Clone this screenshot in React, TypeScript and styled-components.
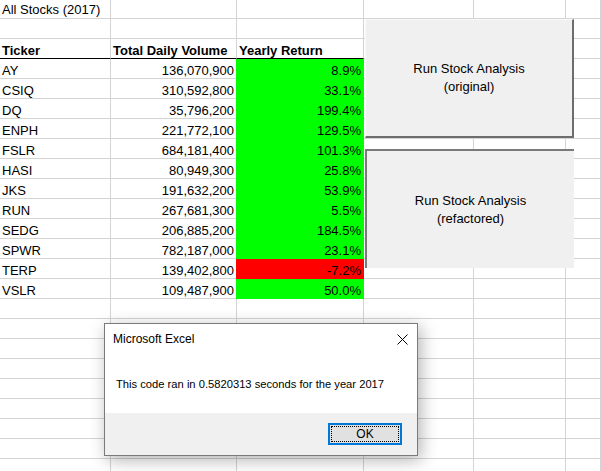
import { Fragment } from "react"
import styled, { createGlobalStyle } from "styled-components"

const GlobalStyle = createGlobalStyle`
    body {
        margin: 0;
        background: #fff;
        overflow: hidden;
    }
`

const GRID = "#d4d4d4"

const Page = styled.div`
    position: relative;
    width: 100vw;
    height: 100vh;
    overflow: hidden;
    font-family: "Liberation Sans", Arial, sans-serif;
`

const Sheet = styled.div`
    display: grid;
    grid-template-columns: 111px 126px 127px 110px 92px 1fr;
    grid-template-rows: 19px;
    grid-auto-rows: 20px;
`

const Cell = styled.div<{ $align?: "left" | "right"; $bold?: boolean; $fill?: string; $underline?: boolean; $top?: boolean }>`
    box-sizing: border-box;
    display: flex;
    align-items: flex-end;
    justify-content: ${p => (p.$align === "right" ? "flex-end" : "flex-start")};
    padding: 0 2px ${p => (p.$top ? "1px" : "0")};
    border-right: 1px solid ${p => p.$fill ?? GRID};
    border-bottom: 1px solid ${p => (p.$underline ? "#000" : p.$fill ?? GRID)};
    background: ${p => p.$fill ?? "#fff"};
    box-shadow: ${p => (p.$fill ? `-1px 0 0 ${p.$fill}` : "none")};
    font-size: 13px;
    line-height: 14px;
    font-weight: ${p => (p.$bold ? 700 : 400)};
    color: #000;
    white-space: nowrap;
`

const ShapeButton = styled.div<{ $left: number; $top: number; $pressed?: boolean }>`
    position: absolute;
    left: ${p => p.$left}px;
    top: ${p => p.$top}px;
    width: 209px;
    height: 119px;
    box-sizing: border-box;
    display: flex;
    flex-direction: column;
    align-items: center;
    justify-content: center;
    background: #f0f0f0;
    border-style: solid;
    border-width: ${p => (p.$pressed ? "2px 0 0 2px" : "1px 2px 2px 1px")};
    border-color: ${p => (p.$pressed ? "#7a7a7a" : "#fafafa #6d6d6d #6d6d6d #fafafa")};
    font-size: 13px;
    line-height: 18px;
    color: #000;
    text-align: center;
`

const Dialog = styled.div`
    position: absolute;
    left: 104px;
    top: 323px;
    width: 314px;
    height: 133px;
    box-sizing: border-box;
    display: flex;
    flex-direction: column;
    background: #fff;
    border: 1px solid #7a7a7a;
    box-shadow: 3px 4px 16px rgba(0, 0, 0, 0.3);
`

const TitleBar = styled.div`
    height: 30px;
    display: flex;
    align-items: center;
    justify-content: space-between;
    padding: 0 9px 0 8px;
    font-size: 12px;
    color: #000;
`

const CloseIcon = () => (
    <svg width="11" height="11" viewBox="0 0 11 11">
        <path d="M0.5 0.5 L10.5 10.5 M10.5 0.5 L0.5 10.5" stroke="#000" strokeWidth="1" fill="none" />
    </svg>
)

const Message = styled.div`
    height: 59px;
    display: flex;
    align-items: center;
    padding-left: 11px;
    font-size: 11.2px;
    color: #000;
`

const Footer = styled.div`
    flex: 1;
    display: flex;
    justify-content: flex-end;
    align-items: flex-start;
    padding: 10px 15px 0 0;
    background: #f0f0f0;
`

const OkButton = styled.button`
    position: relative;
    width: 74px;
    height: 22px;
    box-sizing: border-box;
    border: 2px solid #0078d7;
    background: #e1e1e1;
    font-family: "Liberation Sans", Arial, sans-serif;
    font-size: 12px;
    color: #000;
    padding: 0;
    &::after {
        content: "";
        position: absolute;
        inset: 1px;
        border: 1px dotted #000;
    }
`

const stocks: [string, string, string][] = [
    ["AY", "136,070,900", "8.9%"],
    ["CSIQ", "310,592,800", "33.1%"],
    ["DQ", "35,796,200", "199.4%"],
    ["ENPH", "221,772,100", "129.5%"],
    ["FSLR", "684,181,400", "101.3%"],
    ["HASI", "80,949,300", "25.8%"],
    ["JKS", "191,632,200", "53.9%"],
    ["RUN", "267,681,300", "5.5%"],
    ["SEDG", "206,885,200", "184.5%"],
    ["SPWR", "782,187,000", "23.1%"],
    ["TERP", "139,402,800", "-7.2%"],
    ["VSLR", "109,487,900", "50.0%"],
]

const Blanks = ({ n }: { n: number }) => (
    <>
        {Array.from({ length: n }).map((_, i) => (
            <Cell key={i} />
        ))}
    </>
)

const App = () => {
    return (
        <Page>
            <GlobalStyle />
            <Sheet>
                <Cell $top>All Stocks (2017)</Cell>
                <Blanks n={5} />
                <Blanks n={6} />
                <Cell $bold $underline>Ticker</Cell>
                <Cell $bold $underline>Total Daily Volume</Cell>
                <Cell $bold $underline>Yearly Return</Cell>
                <Blanks n={3} />
                {stocks.map(([ticker, volume, ret]) => (
                    <Fragment key={ticker}>
                        <Cell>{ticker}</Cell>
                        <Cell $align="right">{volume}</Cell>
                        <Cell $align="right" $fill={ret.startsWith("-") ? "#ff0000" : "#00ff00"}>
                            {ret}
                        </Cell>
                        <Blanks n={3} />
                    </Fragment>
                ))}
                <Blanks n={54} />
            </Sheet>

            <ShapeButton $left={365} $top={19}>
                <span>Run Stock Analysis</span>
                <span>(original)</span>
            </ShapeButton>
            <ShapeButton $left={365} $top={149} $pressed>
                <span>Run Stock Analysis</span>
                <span>(refactored)</span>
            </ShapeButton>

            <Dialog>
                <TitleBar>
                    <span>Microsoft Excel</span>
                    <CloseIcon />
                </TitleBar>
                <Message>This code ran in 0.5820313 seconds for the year 2017</Message>
                <Footer>
                    <OkButton>OK</OkButton>
                </Footer>
            </Dialog>
        </Page>
    )
}

export default App
